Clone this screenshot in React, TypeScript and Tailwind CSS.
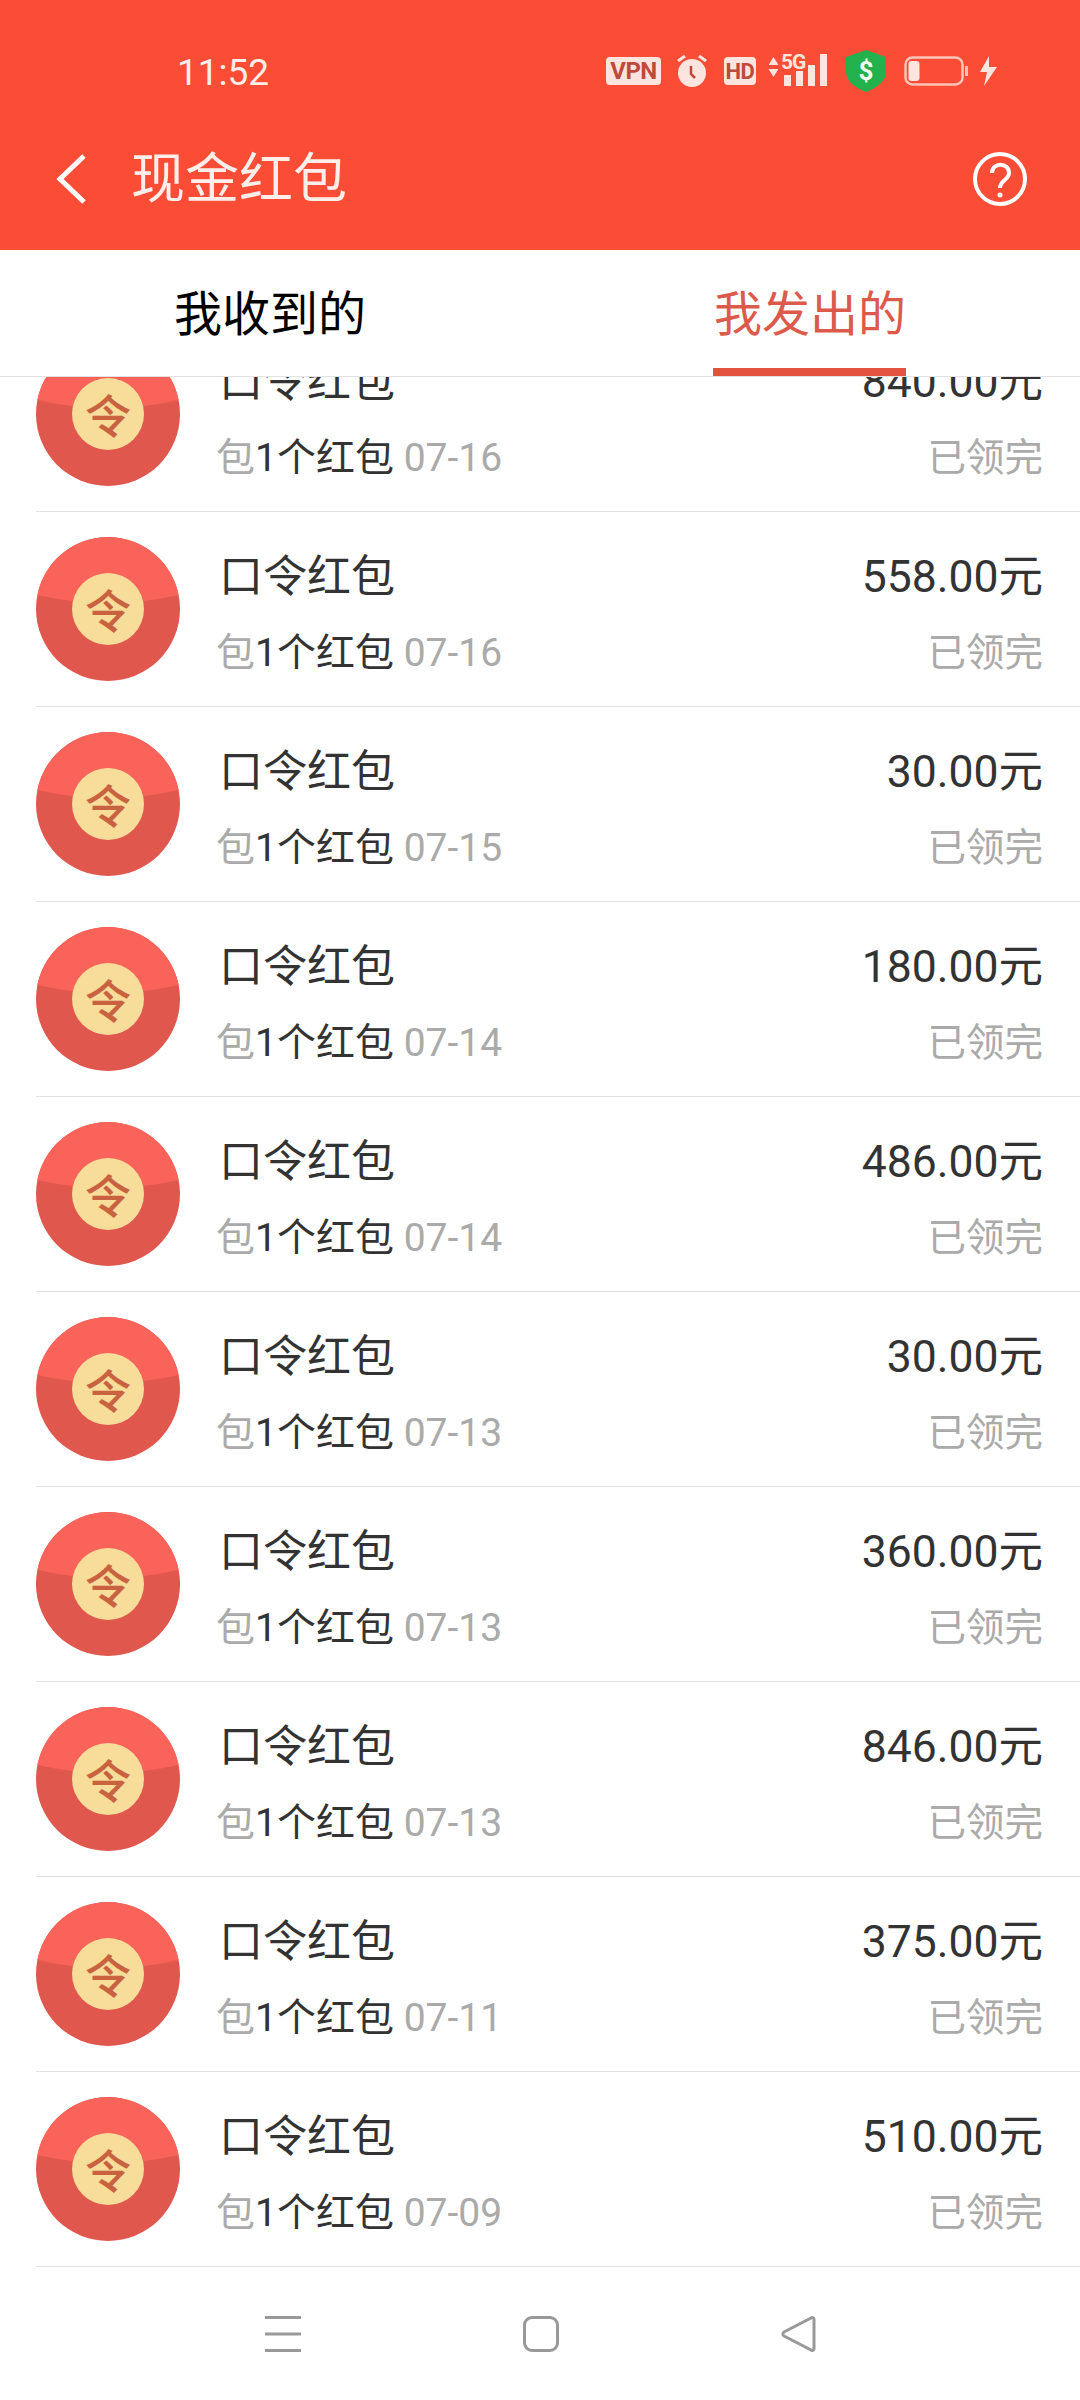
const rows = [
  { amount: "840.00元", date: "07-16" },
  { amount: "558.00元", date: "07-16" },
  { amount: "30.00元", date: "07-15" },
  { amount: "180.00元", date: "07-14" },
  { amount: "486.00元", date: "07-14" },
  { amount: "30.00元", date: "07-13" },
  { amount: "360.00元", date: "07-13" },
  { amount: "846.00元", date: "07-13" },
  { amount: "375.00元", date: "07-11" },
  { amount: "510.00元", date: "07-09" },
];

const Avatar = () => (
  <svg className="shrink-0" width="144" height="144" viewBox="0 0 144 144">
    <circle cx="72" cy="72" r="72" fill="#e0574e" />
    <path d="M1.4 58 A72 72 0 0 1 142.6 58 Q72 74 1.4 58 Z" fill="#f9635a" />
    <circle cx="72" cy="72" r="36" fill="#f8dc9a" />
    <text x="72" y="91" textAnchor="middle" fontSize="46" fontWeight="500" fill="#c9623f" fontFamily='"Noto Sans CJK SC", sans-serif'>
      令
    </text>
  </svg>
);

const StatusIcons = () => (
  <div className="flex items-center text-[#fde4df]">
    <span className="flex h-[28px] w-[55px] items-center justify-center rounded-[4px] bg-[#fde4df] font-['Roboto',sans-serif] text-[24px] font-bold tracking-[-0.5px] text-[#c0493a]">
      VPN
    </span>
    <svg className="ml-[15px]" width="32" height="34" viewBox="0 0 32 34">
      <circle cx="16" cy="19" r="14" fill="#fde4df" />
      <path d="M2 7 L9 2 M30 7 L23 2" stroke="#fde4df" strokeWidth="3" />
      <path d="M15 12 L15 20 L19 24" stroke="#c0493a" strokeWidth="2.5" fill="none" />
    </svg>
    <span className="ml-[16px] flex h-[28px] w-[32px] items-center justify-center rounded-[4px] bg-[#fde4df] font-['Roboto',sans-serif] text-[22px] font-bold tracking-[-0.5px] text-[#c0493a]">
      HD
    </span>
    <div className="relative ml-[12px] h-[34px] w-[60px]">
      <svg className="absolute top-[2px] left-0" width="11" height="22" viewBox="0 0 11 22">
        <path d="M5.5 1 L10.5 9 L0.5 9 Z M5.5 21 L10.5 13 L0.5 13 Z" fill="#fde4df" />
      </svg>
      <span className="absolute top-[-4px] left-[13px] font-['Roboto',sans-serif] text-[21px] leading-[24px] font-bold tracking-[-1px]">
        5G
      </span>
      <svg className="absolute top-0 left-[16px]" width="44" height="32" viewBox="0 0 44 32">
        <rect x="0" y="21" width="7" height="11" fill="#fde4df" />
        <rect x="12" y="17" width="7" height="15" fill="#fde4df" />
        <rect x="24" y="11" width="7" height="21" fill="#fde4df" />
        <rect x="36" y="0" width="7" height="32" fill="#fde4df" />
      </svg>
    </div>
    <svg className="ml-[18px]" width="40" height="42" viewBox="0 0 40 42">
      <path d="M20 0 L40 7 V22 C40 32 30 38 20 42 C10 38 0 32 0 22 V7 Z" fill="#22b14c" />
      <text x="20" y="30" textAnchor="middle" fontSize="26" fontWeight="700" fill="#f2fff2" fontFamily="Roboto, sans-serif">
        $
      </text>
    </svg>
    <svg className="ml-[18px]" width="64" height="30" viewBox="0 0 64 30">
      <rect x="1.5" y="1.5" width="57" height="27" rx="7" fill="none" stroke="#fcc4b8" strokeWidth="2.5" />
      <rect x="4.5" y="5" width="11" height="20" rx="3" fill="#fde4df" />
      <rect x="61" y="10" width="3" height="10" fill="#fcc4b8" />
    </svg>
    <svg className="ml-[10px]" width="20" height="30" viewBox="0 0 20 30">
      <path d="M11 0 L2 16 H9 L6 30 L19 11 H11 Z" fill="#fde4df" />
    </svg>
  </div>
);

const App = () => {
  return (
    <div className="flex h-[2400px] w-[1080px] flex-col overflow-hidden bg-white font-['Roboto','Noto_Sans_CJK_SC',sans-serif]">
      <div className="h-[250px] shrink-0 bg-[#fb4c35] text-white">
        <div className="flex h-[142px] items-center justify-between pr-[82px] pl-[177px]">
          <span className="pt-[3px] text-[37px] text-[#fdeeea]">11:52</span>
          <StatusIcons />
        </div>
        <div className="flex h-[74px] items-center pr-[53px] pl-[55px]">
          <svg width="32" height="50" viewBox="0 0 32 50">
            <path d="M29 2 L5 25 L29 48" fill="none" stroke="#fff" strokeWidth="5" />
          </svg>
          <h1 className="ml-[44px] pt-[2px] text-[54px] leading-none font-normal text-[#fdeeea]">现金红包</h1>
          <svg className="ml-auto" width="54" height="54" viewBox="0 0 54 54">
            <circle cx="27" cy="27" r="25" fill="none" stroke="#fff" strokeWidth="4" />
            <path d="M19 21 C19 10 36 10 36 21 C36 28 27 28 27 36" fill="none" stroke="#fff" strokeWidth="4" />
            <circle cx="27" cy="43" r="2.5" fill="#fff" />
          </svg>
        </div>
      </div>

      <div className="z-10 grid h-[127px] shrink-0 grid-cols-2 border-b border-[#e2e2e2] bg-white text-[48px]">
        <div className="flex items-center justify-center pt-[3px] text-black">我收到的</div>
        <div className="relative flex items-center justify-center pt-[3px] text-[#dc5a4c]">
          我发出的
          <div className="absolute bottom-0 left-[173px] h-[8px] w-[193px] bg-[#e2523f]" />
        </div>
      </div>

      <div className="flex-1 overflow-hidden">
        <div className="-mt-[60px]">
          {rows.map((row, i) => (
            <div key={i} className="ml-[36px] flex h-[195px] items-center border-b border-[#e2e2e2] pr-[37px]">
              <Avatar />
              <div className="ml-[39px] flex flex-1 flex-col gap-[16px] pt-[12px]">
                <div className="flex items-center justify-between text-[44px] leading-[60px] text-[#333333]">
                  <span>口令红包</span>
                  <span className="text-[44.5px]">{row.amount}</span>
                </div>
                <div className="-ml-[3px] flex items-center justify-between text-[39px] leading-[60px] text-[#aaaaaa]">
                  <span>
                    包<span className="text-[#333333]">1个红包</span> {row.date}
                  </span>
                  <span className="text-[38.5px]">已领完</span>
                </div>
              </div>
            </div>
          ))}
        </div>
      </div>

      <div className="flex h-[128px] shrink-0 items-start justify-center bg-white pt-[44px] pl-[2px]">
        <div className="flex w-[258px] justify-center">
          <svg width="36" height="36" viewBox="0 0 36 36">
            <path d="M0 1.5 H36 M0 18 H36 M0 34.5 H36" stroke="#999999" strokeWidth="3" />
          </svg>
        </div>
        <div className="flex w-[258px] justify-center">
          <div className="h-[36px] w-[36px] rounded-[9px] border-[3px] border-[#999999]" />
        </div>
        <div className="flex w-[258px] justify-center">
          <svg width="36" height="36" viewBox="0 0 36 36">
            <path d="M33 3 C33 2 31 1 30 2 L3 16 C1.5 17 1.5 19 3 20 L30 34 C31 35 33 34 33 33 Z" fill="none" stroke="#999999" strokeWidth="3" />
          </svg>
        </div>
      </div>
    </div>
  );
};

export default App;
